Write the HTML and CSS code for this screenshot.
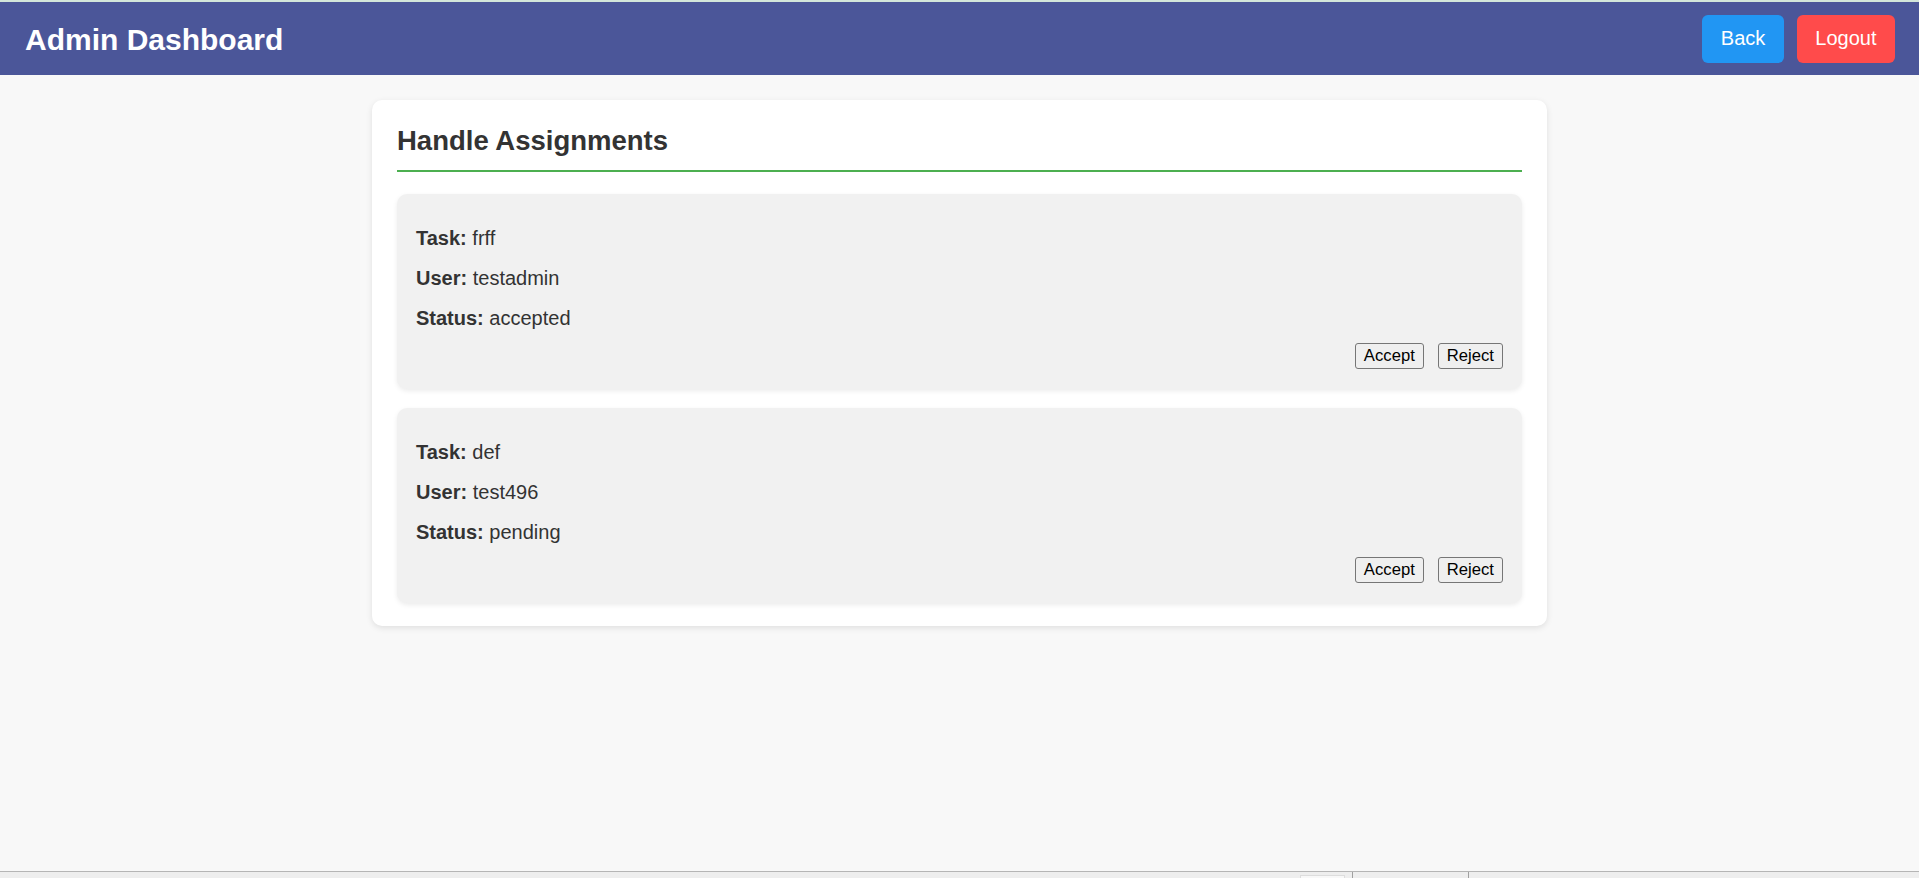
FILE: index.html
```html
<!DOCTYPE html>
<html lang="en">
<head>
<meta charset="utf-8">
<title>Admin Dashboard</title>
<link rel="stylesheet" href="styles.css">
</head>
<body>
<div class="topstrip"></div>
<header class="header">
  <h1 class="brand">Admin Dashboard</h1>
  <nav class="nav">
    <button class="btn btn-back">Back</button>
    <button class="btn btn-logout">Logout</button>
  </nav>
</header>
<main class="panel">
  <h2 class="panel-title">Handle Assignments</h2>
  <div class="list">
    <div class="item">
      <p><strong>Task:</strong> frff</p>
      <p><strong>User:</strong> testadmin</p>
      <p><strong>Status:</strong> accepted</p>
      <div class="actions">
        <button class="small-btn">Accept</button>
        <button class="small-btn">Reject</button>
      </div>
    </div>
    <div class="item">
      <p><strong>Task:</strong> def</p>
      <p><strong>User:</strong> test496</p>
      <p><strong>Status:</strong> pending</p>
      <div class="actions">
        <button class="small-btn">Accept</button>
        <button class="small-btn">Reject</button>
      </div>
    </div>
  </div>
</main>
<div class="statusbar">
  <span class="sb-tab"></span>
  <span class="sb-sep sb-sep1"></span>
  <span class="sb-sep sb-sep2"></span>
</div>
</body>
</html>
```

FILE: styles.css
```css
html, body {
  margin: 0;
  padding: 0;
}
body {
  background: #f8f8f8;
  font-family: "Liberation Sans", Arial, sans-serif;
  color: #333;
  min-height: 878px;
}
.topstrip {
  height: 2px;
  background: #d3e6da;
}
.header {
  display: flex;
  justify-content: space-between;
  align-items: center;
  background: #4b5699;
  padding: 12.5px 24px 12.5px 25px;
}
.brand {
  margin: 2px 0 0;
  font-size: 30px;
  font-weight: bold;
  color: #fff;
}
.nav {
  display: flex;
  gap: 13px;
}
.btn {
  font-family: "Liberation Sans", Arial, sans-serif;
  font-size: 20px;
  line-height: 23px;
  color: #fff;
  border: none;
  border-radius: 6px;
  padding: 12.5px 18.5px;
}
.btn-back {
  background: #2196f3;
}
.btn-logout {
  background: #ff4b4b;
}
.panel {
  display: block;
  width: 1175px;
  box-sizing: border-box;
  margin: 25px auto 0;
  background: #fff;
  border-radius: 10px;
  padding: 25px 25px 23px;
  box-shadow: 0 2px 6px rgba(0, 0, 0, 0.1);
}
.panel-title {
  margin: 0 0 22px;
  padding-bottom: 13px;
  border-bottom: 2px solid #4caf50;
  font-size: 27.5px;
  font-weight: bold;
  color: #333;
}
.list {
  display: flex;
  flex-direction: column;
  gap: 19px;
}
.item {
  background: #f1f1f1;
  border-radius: 10px;
  padding: 19px 19px 20px;
  box-shadow: 0 2px 5px rgba(0, 0, 0, 0.08);
}
.item p {
  margin: 10px 0;
  font-size: 20px;
  line-height: 30px;
}
.actions {
  display: flex;
  justify-content: flex-end;
  gap: 14px;
}
.small-btn {
  font-family: "Liberation Sans", Arial, sans-serif;
  font-size: 16.67px;
  line-height: 20px;
  color: #000;
  background: #efefef;
  border: 1px solid #767676;
  border-radius: 3px;
  padding: 2px 8px;
}
.statusbar {
  position: fixed;
  left: 0;
  right: 0;
  bottom: 0;
  height: 6px;
  background: #eeeeee;
  border-top: 1px solid #b5b5b5;
}
.sb-sep {
  position: absolute;
  top: 0;
  bottom: 0;
  width: 1px;
  background: #a0a0a0;
}
.sb-sep1 { left: 1352px; }
.sb-sep2 { left: 1468px; }
.sb-tab {
  position: absolute;
  left: 1300px;
  width: 43px;
  bottom: 0;
  height: 2px;
  background: #f8f8f8;
  border: 1px solid #ddd;
  border-bottom: none;
}
```
